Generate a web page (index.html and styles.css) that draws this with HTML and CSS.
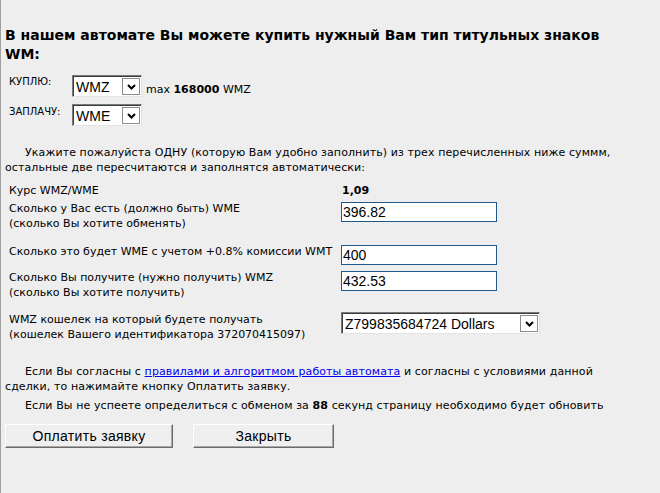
FILE: index.html
```html
<!DOCTYPE html>
<html lang="ru">
<head>
<meta charset="utf-8">
<title>Автомат</title>
<link rel="stylesheet" href="styles.css">
</head>
<body>
<div class="page">
  <h1 class="title">В нашем автомате Вы можете купить нужный Вам тип титульных знаков WM:</h1>

  <div class="cur-row">
    <span class="cur-label">КУПЛЮ:</span>
    <span class="sel sel-small">
      <select class="sel-field"><option>WMZ</option></select>
      <span class="sel-btn"><svg width="9" height="6" viewBox="0 0 9 6"><path d="M1 1 L4.5 4.5 L8 1" fill="none" stroke="#000" stroke-width="2"/></svg></span>
    </span>
    <span class="max">max <b>168000</b> WMZ</span>
  </div>
  <div class="cur-row cur-row-2">
    <span class="cur-label">ЗАПЛАЧУ:</span>
    <span class="sel sel-small">
      <select class="sel-field"><option>WME</option></select>
      <span class="sel-btn"><svg width="9" height="6" viewBox="0 0 9 6"><path d="M1 1 L4.5 4.5 L8 1" fill="none" stroke="#000" stroke-width="2"/></svg></span>
    </span>
  </div>

  <p class="para para-first">Укажите пожалуйста ОДНУ (которую Вам удобно заполнить) из трех перечисленных ниже суммм, остальные две пересчитаются и заполнятся автоматически:</p>

  <div class="form">
    <div class="lbl lbl-rate">Курс WMZ/WME</div>
    <div class="val val-rate"><b>1,09</b></div>

    <div class="lbl lbl-two">Сколько у Вас есть (должно быть) WME<br>(сколько Вы хотите обменять)</div>
    <div class="val val-input"><input class="amount" type="text" value="396.82"></div>

    <div class="lbl lbl-one">Сколько это будет WME с учетом +0.8% комиссии WMT</div>
    <div class="val val-input"><input class="amount" type="text" value="400"></div>

    <div class="lbl lbl-two-b">Сколько Вы получите (нужно получить) WMZ<br>(сколько Вы хотите получить)</div>
    <div class="val val-input"><input class="amount" type="text" value="432.53"></div>

    <div class="lbl">WMZ кошелек на который будете получать<br>(кошелек Вашего идентификатора 372070415097)</div>
    <div class="val">
      <span class="sel sel-wallet">
        <select class="sel-field"><option>Z799835684724 Dollars</option></select>
        <span class="sel-btn"><svg width="9" height="6" viewBox="0 0 9 6"><path d="M1 1 L4.5 4.5 L8 1" fill="none" stroke="#000" stroke-width="2"/></svg></span>
      </span>
    </div>
  </div>

  <p class="para para-agree">Если Вы согласны с <a href="#" class="link">правилами и алгоритмом работы автомата</a> и согласны с условиями данной сделки, то нажимайте кнопку Оплатить заявку.</p>
  <p class="para para-time">Если Вы не успеете определиться с обменом за <b>88</b> секунд страницу необходимо будет обновить</p>

  <div class="buttons">
    <button class="btn btn-pay" type="button">Оплатить заявку</button>
    <button class="btn btn-close" type="button">Закрыть</button>
  </div>
</div>
</body>
</html>
```

FILE: styles.css
```css
html, body {
  margin: 0;
  padding: 0;
  background: #eeeeee;
}

body {
  font-family: "DejaVu Sans", Verdana, sans-serif;
  font-size: 11px;
  line-height: 15px;
  color: #000;
}

.page {
  box-sizing: border-box;
  min-height: 100vh;
  border-left: 1px solid #a0a0a0;
  padding: 26px 0 0 4px;
  width: 615px;
}

.title {
  margin: 0;
  font-size: 14px;
  line-height: 19px;
  font-weight: bold;
}

.cur-row {
  display: flex;
  align-items: flex-start;
  margin-top: 11px;
}

.cur-row-2 {
  margin-top: 7px;
}

.cur-label {
  width: 63px;
  padding-left: 4px;
  font-size: 10px;
  line-height: 14px;
}

.cur-row-2 .cur-label {
  padding-top: 1px;
}

.max {
  align-self: flex-end;
  margin-left: 4px;
  line-height: 15px;
}

.sel {
  box-sizing: border-box;
  display: inline-flex;
  align-items: stretch;
  height: 22px;
  background: #fff;
  border: 1px solid;
  border-color: #7a7a7a #e4e4e4 #e4e4e4 #7a7a7a;
  box-shadow: inset 1px 1px 0 #3c3c3c;
  padding: 2px 1px 1px 2px;
}

.sel-small {
  width: 70px;
}

.sel-wallet {
  width: 199px;
}

.sel-field {
  -webkit-appearance: none;
  appearance: none;
  flex: 1;
  min-width: 0;
  border: 0;
  margin: 0;
  padding: 0 0 0 1px;
  background: transparent;
  font-family: "Liberation Sans", Arial, sans-serif;
  font-size: 14px;
  color: #000;
  outline: none;
}

.sel-btn {
  box-sizing: border-box;
  width: 18px;
  border: 1px solid #8c8c8c;
  background: #fff;
  display: flex;
  align-items: center;
  justify-content: center;
}

.para {
  margin: 0;
  text-indent: 20px;
  letter-spacing: 0.1px;
}

.para-first {
  margin-top: 19px;
}

.para-agree {
  margin-top: 22px;
}

.para-time {
  margin-top: 4px;
}

.link {
  color: #0000ee;
  text-decoration: underline;
}

.form {
  display: grid;
  grid-template-columns: 336px 1fr;
  margin-top: 8px;
}

.lbl {
  padding-left: 4px;
}

.lbl-rate {
  padding-bottom: 3px;
}

.lbl-two {
  padding-bottom: 13px;
}

.lbl-one {
  padding-bottom: 11px;
}

.lbl-two-b {
  padding-bottom: 12px;
}

.val-rate {
  padding-left: 1px;
}

.val-input {
  padding-top: 1px;
}

.amount {
  box-sizing: border-box;
  width: 156px;
  height: 20px;
  margin: 0;
  border: 1px solid #1f5a8c;
  padding: 0 1px;
  background: #fff;
  font-family: "Liberation Sans", Arial, sans-serif;
  font-size: 14px;
  color: #000;
  outline: none;
}

.buttons {
  display: flex;
  gap: 20px;
  margin-top: 11px;
}

.btn {
  box-sizing: border-box;
  height: 24px;
  margin: 0;
  padding: 0;
  background: #efefef;
  border: 1px solid;
  border-color: #ffffff #6a6a6a #6a6a6a #ffffff;
  box-shadow: inset -1px -1px 0 #a8a8a8;
  font-family: "Liberation Sans", Arial, sans-serif;
  font-size: 14px;
  letter-spacing: 0.3px;
  color: #000;
}

.btn-pay {
  width: 168px;
}

.btn-close {
  width: 141px;
}
```
